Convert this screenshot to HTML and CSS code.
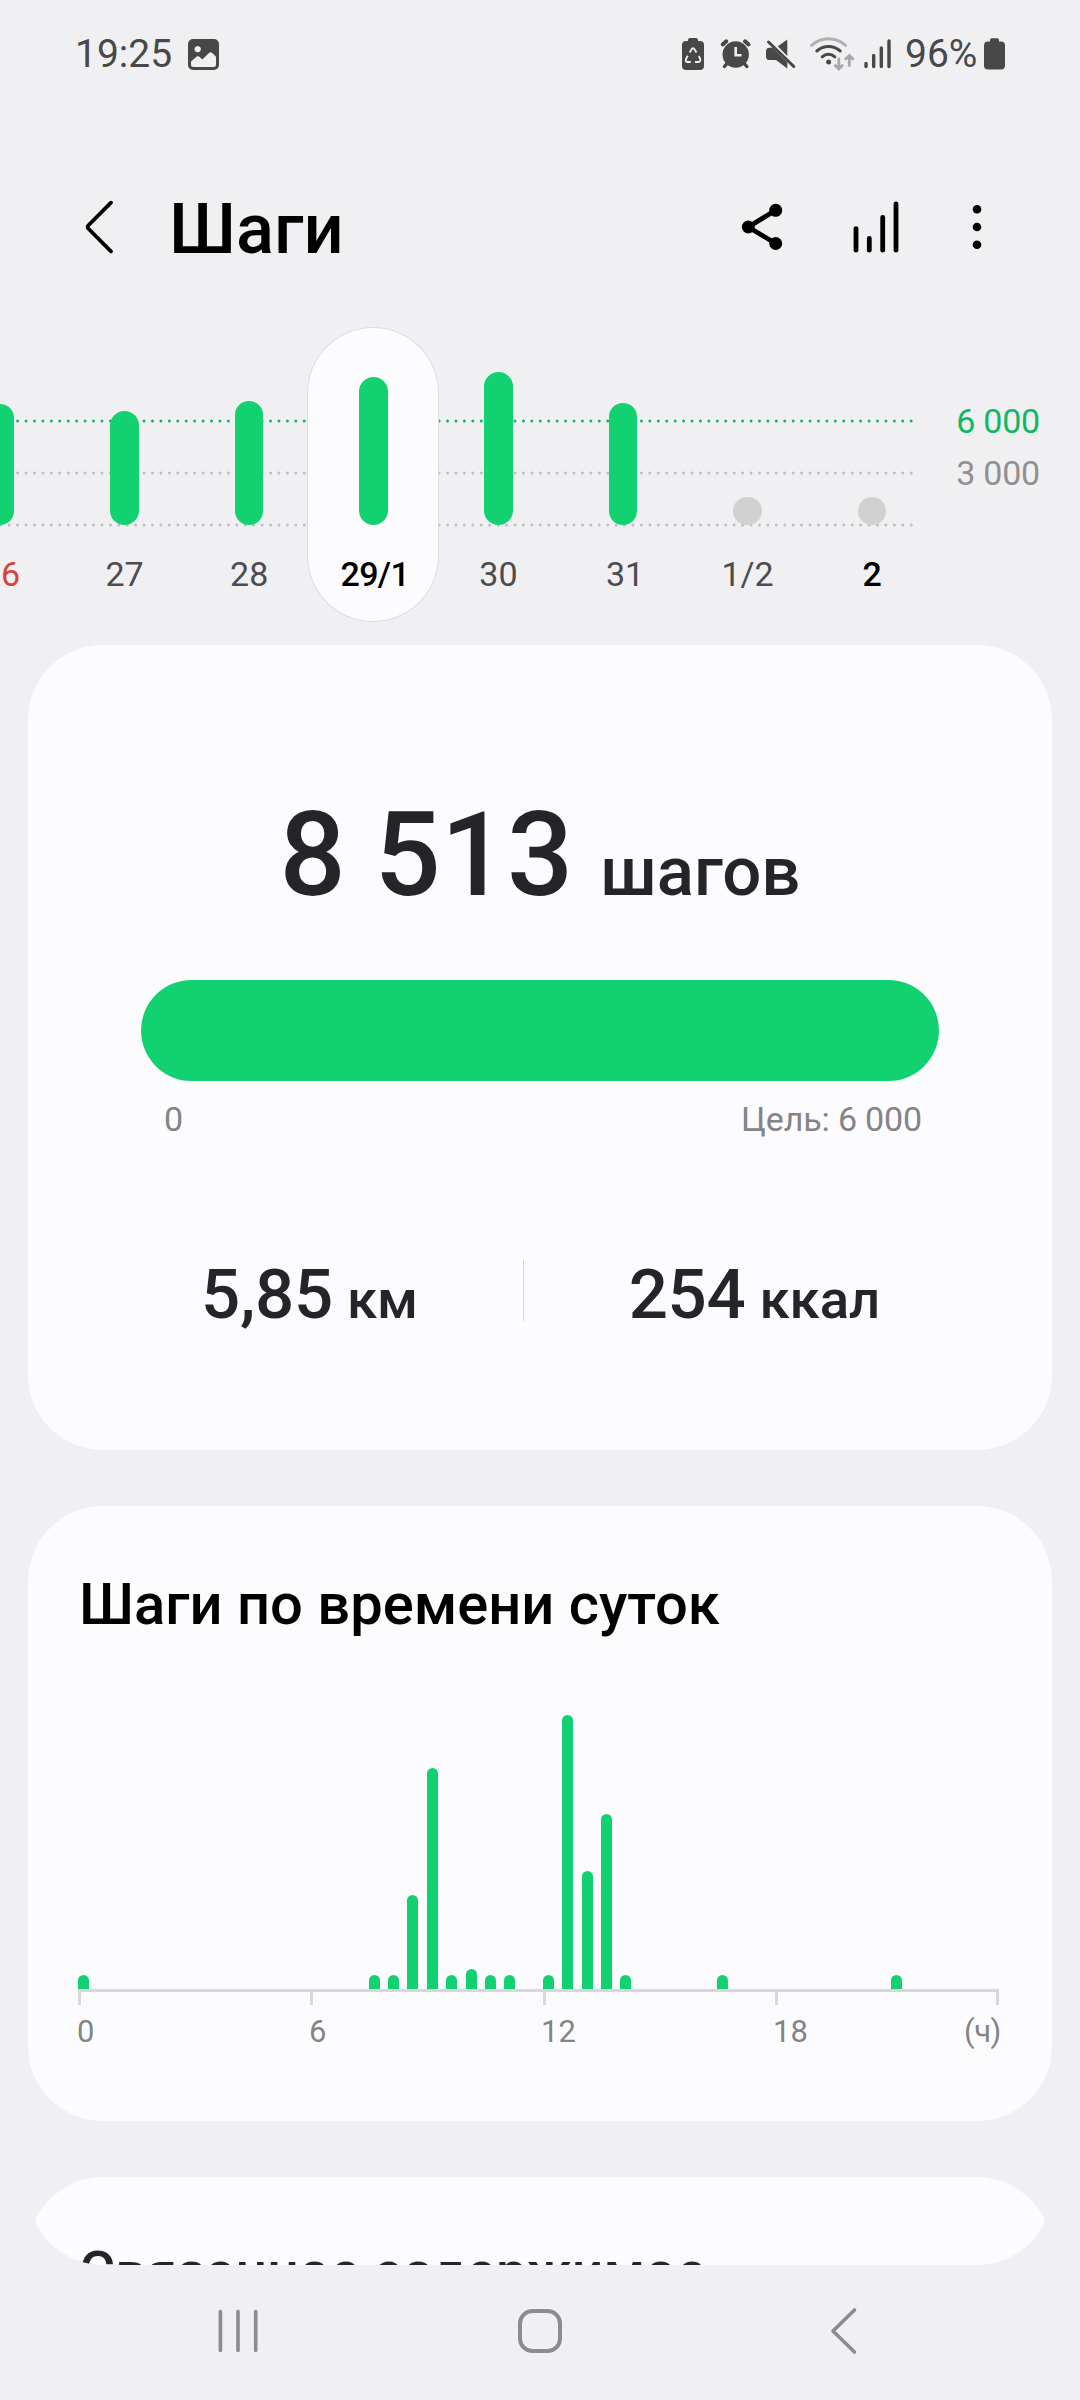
FILE: index.html
```html
<!DOCTYPE html>
<html lang="ru">
<head>
<meta charset="utf-8">
<title>Шаги</title>
<link rel="stylesheet" href="styles.css">
</head>
<body>
<div class="status">
  <span class="clock">19:25</span>
  <svg class="picture" width="31" height="31" viewBox="0 0 31 31"><path fill="currentColor" fill-rule="evenodd" d="M5 0h21a5 5 0 0 1 5 5v21a5 5 0 0 1-5 5H5a5 5 0 0 1-5-5V5a5 5 0 0 1 5-5ZM9.700 6.900a3.200 3.200 0 1 0 .01 0ZM3 22.500 8.800 17.600Q10.200 16.600 11.500 17.800L14.300 20.500 21 14Q22.700 12.500 24.200 14L28 17.700V25.500Q28 28 25.500 28H5.500Q3 28 3 25.500Z"/></svg>
  <div class="tray">
    <svg width="24" height="40" viewBox="0 0 24 40"><path fill="currentColor" d="M7 7V6q0-2 2-2h6q2 0 2 2v1h2q4 0 4 4v21q0 4-4 4H5q-4 0-4-4V11q0-4 4-4Z"/><path d="M8.600 18.500 10.800 15Q12 13.500 13.300 15L15.500 18.500M17.800 22 19.300 25Q19.800 27.700 17.500 28H14M9.800 28H6.500Q4 27.500 5 25L6.800 21.800" fill="none" stroke="#f0f0f3" stroke-width="1.800"/></svg>
    <svg width="32" height="40" viewBox="0 0 32 40"><circle cx="16.700" cy="20.500" r="13.200" fill="currentColor"/><path d="M3.700 10.500 7.300 7.300M29.600 10.500 26 7.300" stroke="currentColor" stroke-width="4" stroke-linecap="round"/><path d="M8 29.500 5.500 32.500M25.300 29.500 27.800 32.500" stroke="currentColor" stroke-width="3.500" stroke-linecap="round"/><path d="M16.700 13v8.300h5.800" fill="none" stroke="#f0f0f3" stroke-width="2.600"/></svg>
    <svg width="30" height="40" viewBox="0 0 30 40"><path fill="currentColor" d="M12.800 12.200 22.300 5.500V22ZM7.500 13.800 22.300 28.300V34.500L11 26H4.500Q1 26 1 22.500V17.500Q1 14 4.500 13.800Z"/><path d="M3.500 8 28.800 32.500" stroke="currentColor" stroke-width="3" stroke-linecap="round"/></svg>
    <svg width="46" height="40" viewBox="0 0 46 40"><g fill="none" stroke-linecap="round" stroke-width="3"><path d="M2.500 11.300Q10 4.800 19.500 4.800T36.500 11.300" stroke="#b0b0b2"/><path d="M7.800 17Q13 12.500 19.500 12.500T31.200 17M13.200 22.800Q16 20.300 19.500 20.300T25.800 22.800" stroke="currentColor"/><path d="M29.800 25v9M26.300 31.500 29.800 35 33.300 31.500M40.300 31.500V22M36.800 25 40.300 21.500 43.800 25" stroke="#a8a8aa" stroke-width="2.800"/></g><circle cx="19.600" cy="28" r="2.500" fill="currentColor"/></svg>
    <svg class="signal" width="29" height="40" viewBox="0 0 29 40"><path d="M3 29.500v3M10.700 21.500v11M18.300 14v18.500M26 7v25.500" stroke="currentColor" stroke-width="3.400" stroke-linecap="round"/></svg>
    <span class="percent">96%</span>
    <svg class="battery" width="21" height="40" viewBox="0 0 21 40"><path fill="currentColor" d="M6 7.500V6q0-1.700 1.700-1.700h5.600Q15 4.300 15 6v1.500h2q4 0 4 4v20q0 4-4 4H4q-4 0-4-4v-20q0-4 4-4Z"/></svg>
  </div>
</div>

<header class="appbar">
  <svg width="30" height="60" viewBox="0 0 30 60"><path d="M26 3.700 3.500 26.200Q1.800 28 3.500 29.800L26 52.300" fill="none" stroke="#000" stroke-width="3.800" stroke-linecap="round"/></svg>
  <h1>Шаги</h1>
  <svg width="42" height="60" viewBox="0 0 42 60"><path d="M34.700 11.300 7.300 28 34.700 44.500" fill="none" stroke="#000" stroke-width="4.800"/><circle cx="34.700" cy="11.300" r="6.500"/><circle cx="7.300" cy="28" r="6.500"/><circle cx="34.700" cy="44.500" r="6.500"/></svg>
  <svg class="stats-icon" width="46" height="60" viewBox="0 0 46 60"><path d="M3 29.700v21.500M16.300 39.500v11.700M29.700 18.300v32.900M43 5v46.200" stroke="#000" stroke-width="4.800" stroke-linecap="round"/></svg>
  <svg class="more-icon" width="10" height="60" viewBox="0 0 10 60"><circle cx="5" cy="10.200" r="4.300"/><circle cx="5" cy="28" r="4.300"/><circle cx="5" cy="45.700" r="4.300"/></svg>
</header>

<section class="week">
  <svg class="guides" width="920" height="295"><g fill="none" stroke-width="3" stroke-linecap="round" stroke-dasharray="0 8.430"><path d="M911.200 94H0" stroke="#13b36b"/><path d="M911.200 146H0" stroke="#bebec0"/><path d="M911.200 198H0" stroke="#bebec0"/></g></svg>
  <div class="days">
    <div class="day sunday"><div class="track"><i style="height:121.500px"></i></div><span>26</span></div>
    <div class="day"><div class="track"><i style="height:114.300px"></i></div><span>27</span></div>
    <div class="day"><div class="track"><i style="height:124px"></i></div><span>28</span></div>
    <div class="day selected"><div class="track"><i style="height:148px"></i></div><span>29/1</span></div>
    <div class="day"><div class="track"><i style="height:153.300px"></i></div><span>30</span></div>
    <div class="day last"><div class="track"><i style="height:122.300px"></i></div><span>31</span></div>
    <div class="day empty"><div class="track"><i></i></div><span>1/2</span></div>
    <div class="day empty today"><div class="track"><i></i></div><span>2</span></div>
  </div>
  <div class="scale"><span class="goal">6 000</span><span>3 000</span></div>
</section>

<main class="content">
  <section class="card summary">
    <div class="total"><b>8 513</b><span>шагов</span></div>
    <div class="progress"></div>
    <div class="range"><span>0</span><span class="target">Цель: 6 000</span></div>
    <div class="facts">
      <div class="fact distance"><b>5,85</b><span>км</span></div>
      <div class="divider"></div>
      <div class="fact energy"><b>254</b><span>ккал</span></div>
    </div>
  </section>

  <section class="card hourly">
    <h2>Шаги по времени суток</h2>
    <div class="plot">
      <i style="grid-column:1;height:14px"></i>
      <i style="grid-column:16;height:14px"></i>
      <i style="grid-column:17;height:14px"></i>
      <i style="grid-column:18;height:93.700px"></i>
      <i style="grid-column:19;height:220.700px"></i>
      <i style="grid-column:20;height:14px"></i>
      <i style="grid-column:21;height:20px"></i>
      <i style="grid-column:22;height:14px"></i>
      <i style="grid-column:23;height:14px"></i>
      <i style="grid-column:25;height:14px"></i>
      <i style="grid-column:26;height:273.700px"></i>
      <i style="grid-column:27;height:118px"></i>
      <i style="grid-column:28;height:175px"></i>
      <i style="grid-column:29;height:14px"></i>
      <i style="grid-column:34;height:14px"></i>
      <i style="grid-column:43;height:14px"></i>
    </div>
    <div class="axis"><i></i><i></i><i></i><i></i></div>
    <div class="hours"><span>0</span><span>6</span><span>12</span><span>18</span><span class="unit">(ч)</span></div>
  </section>

  <section class="card related"><h2>Связанное содержимое</h2></section>
</main>

<nav class="navbar">
  <svg width="60" height="60" viewBox="0 0 60 60"><path d="M13.400 9.500v39M31 9.500v39M48.700 9.500v39" stroke="#8c8c8e" stroke-width="3.600" stroke-linecap="round"/></svg>
  <svg width="60" height="60" viewBox="0 0 60 60"><rect x="10" y="9" width="40" height="40" rx="12.500" fill="none" stroke="#8c8c8e" stroke-width="4"/></svg>
  <svg width="60" height="60" viewBox="0 0 60 60"><path d="M41.500 8 20 29 41.500 50" fill="none" stroke="#8c8c8e" stroke-width="3.600" stroke-linecap="round" stroke-linejoin="round"/></svg>
</nav>
</body>
</html>
```
FILE: styles.css
```css
* { box-sizing: border-box; }
body {
  margin: 0;
  width: 1080px;
  height: 2400px;
  overflow: hidden;
  background: #f0f0f3;
  color: #000;
  font-family: Roboto, "Noto Sans", sans-serif;
  display: flex;
  flex-direction: column;
}
h1, h2 { margin: 0; font-weight: 500; }
b { font-weight: 500; }
svg { flex: none; display: block; overflow: visible; }

.status {
  height: 108px;
  padding: 0 75px 0 75px;
  display: flex;
  align-items: center;
  color: #484848;
  font-size: 39px;
}
.clock { width: 113px; }
.picture { margin-top: 1px; }
.tray { margin-left: auto; display: flex; align-items: center; gap: 14px; }
.signal { margin-left: -6px; }
.percent { width: 73px; margin-left: -1px; }
.battery { margin-left: -8px; }

.appbar {
  height: 219px;
  padding: 22px 98px 0 85px;
  display: flex;
  align-items: center;
}
.appbar h1 { flex: 1; margin-left: 54px; font-size: 70.5px; }
.stats-icon { margin-left: 70px; }
.more-icon { margin-left: 73px; }

.week {
  position: relative;
  height: 295px;
  margin-bottom: 23px;
  display: flex;
  font-size: 34px;
}
.guides { position: absolute; left: 0; top: 0; }
.days { position: relative; display: flex; margin-left: -62.3px; }
.day {
  width: 124.6px;
  display: flex;
  flex-direction: column;
  align-items: center;
  color: #4c4c4f;
}
.track { height: 198px; display: flex; align-items: flex-end; }
.track i { width: 28.5px; border-radius: 15px; background: #12d170; }
.day span { margin-top: 29px; line-height: 40px; }
.sunday { color: #d8413a; }
.sunday span { padding-left: 2px; }
.last span { padding-left: 4px; }
.empty i { height: 28.5px; background: #d1d1d1; }
.today, .selected { color: #000; font-weight: 500; }
.selected {
  width: 132px;
  margin: 0 -3.2px 0 -4.2px;
  border-radius: 66px;
  background: #fcfcff;
  box-shadow: inset 0 0 0 1px #dcdcdf;
}
.selected span { padding-left: 3px; letter-spacing: -0.7px; }
.scale {
  flex: 1;
  padding: 68px 40px 0 0;
  display: flex;
  flex-direction: column;
  align-items: flex-end;
  line-height: 52px;
  letter-spacing: -0.2px;
  color: #909090;
}
.goal { color: #10b765; }

.content {
  height: 1620px;
  margin: 0 28px;
  display: flex;
  flex-direction: column;
  gap: 56px;
  overflow: hidden;
  border-radius: 0 0 75px 75px;
}
.card { flex: none; border-radius: 75px; background: #fcfcff; }

.summary { height: 805px; padding-top: 140px; color: #252528; }
.total {
  height: 140px;
  display: flex;
  justify-content: center;
  align-items: baseline;
  gap: 27px;
  font-weight: 500;
}
.total b { font-size: 116.5px; line-height: 140px; }
.total span { font-size: 69px; line-height: 1; }
.progress {
  height: 101px;
  margin: 55px 113px 18px;
  border-radius: 51px;
  background: #12d170;
}
.range {
  padding: 0 130px 0 136px;
  display: flex;
  justify-content: space-between;
  font-size: 34px;
  line-height: 40px;
  color: #848487;
}
.target { letter-spacing: -0.15px; }
.facts { display: flex; height: 69px; margin-top: 121px; padding-left: 70px; }
.fact {
  display: flex;
  justify-content: center;
  align-items: baseline;
  gap: 14px;
  font-weight: 500;
}
.fact b { font-size: 69px; line-height: 69px; letter-spacing: -0.3px; }
.fact span { font-size: 54.5px; line-height: 1; }
.distance { width: 425px; padding-right: 2px; }
.energy { width: 461px; }
.divider { width: 1px; height: 61px; background: #d6d6d9; }

.hourly { height: 615px; padding-top: 64px; }
.card h2 { padding-left: 51px; font-size: 57.9px; line-height: 68px; }
.plot {
  height: 351px;
  margin-left: 46.2px;
  display: grid;
  grid-template-columns: repeat(48, 19.36px);
  align-items: end;
  justify-items: center;
}
.plot i { grid-row: 1; width: 11px; border-radius: 6px 6px 0 0; background: #12d170; }
.axis {
  width: 921px;
  height: 16px;
  margin-left: 50px;
  display: grid;
  grid-template-columns: repeat(3, 232.4px) 1fr;
  border-top: 3px solid #d8d8da;
  border-right: 3px solid #d8d8da;
}
.axis i { border-left: 3px solid #d8d8da; }
.hours {
  width: 924px;
  margin: 9px 0 0 49px;
  display: grid;
  grid-template-columns: repeat(3, 232px) 1fr auto;
  font-size: 31px;
  line-height: 36px;
  color: #848484;
}
.unit { letter-spacing: -0.4px; }

.card.related { height: 300px; padding-top: 62px; }
.related h2 { font-size: 55.4px; color: #252528; }

.navbar {
  height: 133px;
  padding: 0 207px 0 207px;
  display: flex;
  align-items: center;
  justify-content: space-between;
}
```
